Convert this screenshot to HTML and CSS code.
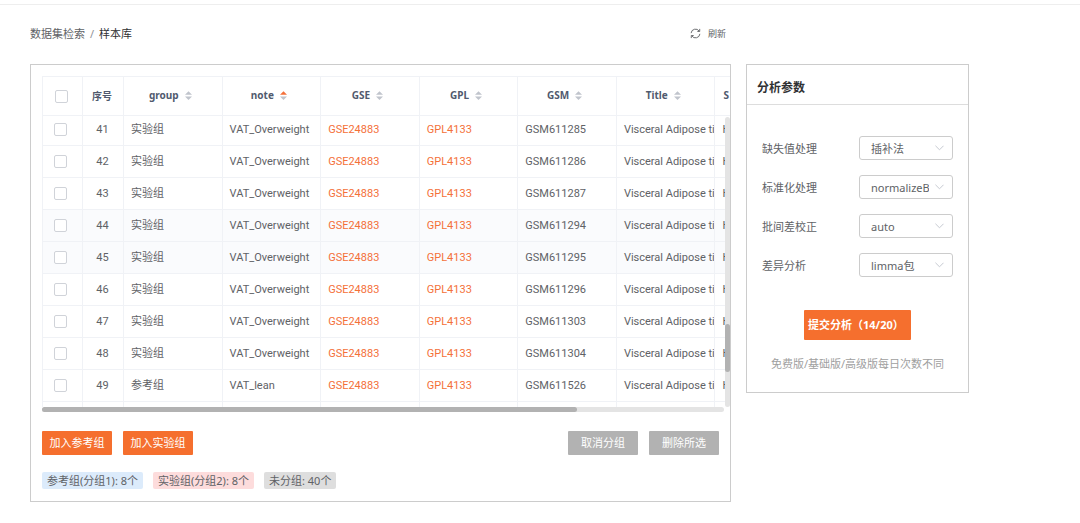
FILE: index.html
```
<!DOCTYPE html>
<html lang="zh-CN">
<head>
  <meta charset="UTF-8">
  <meta name="viewport" content="width=device-width, initial-scale=1.0">
  <title>样本库</title>
  <link rel="stylesheet" href="styles.css">
</head>
<body>
  <div class="top-line"></div>
  <main class="page">
    <div class="page-header">
      <nav class="breadcrumb">
        <a href="#">数据集检索</a>
        <span class="separator">/</span>
        <span class="current">样本库</span>
      </nav>
      <button class="refresh-button" type="button">
        <svg class="refresh-icon" viewBox="0 0 12 12" fill="none" stroke="currentColor">
          <path d="M1.2 5.6A4.8 4.8 0 0 1 10 3.4M10.8 6.4A4.8 4.8 0 0 1 2 8.6"/>
          <path d="M10.6 1v2.8H8M1.4 11V8.2H4"/>
        </svg>
        刷新
      </button>
    </div>

    <section class="panel sample-panel">
      <div class="table-wrap">
        <div class="table-head">
          <table class="sample-table">
            <colgroup><col class="col-check"><col class="col-index"><col span="8"></colgroup>
            <thead>
              <tr id="head-row">
                <th class="plain"><input type="checkbox" aria-label="全选"></th>
                <th class="plain">序号</th>
              </tr>
            </thead>
          </table>
        </div>
        <div class="table-body">
          <table class="sample-table">
            <colgroup><col class="col-check"><col class="col-index"><col span="8"></colgroup>
            <tbody id="sample-rows"></tbody>
          </table>
          <div class="scroll-y"><div class="thumb-y"></div></div>
        </div>
        <div class="scroll-x"><div class="thumb-x"></div></div>
      </div>

      <div class="actions">
        <button class="btn btn-primary" type="button">加入参考组</button>
        <button class="btn btn-primary" type="button">加入实验组</button>
        <button class="btn btn-grey push-right" type="button">取消分组</button>
        <button class="btn btn-grey" type="button">删除所选</button>
      </div>

      <div class="tags">
        <span class="tag tag-blue">参考组(分组1): 8个</span>
        <span class="tag tag-red">实验组(分组2): 8个</span>
        <span class="tag tag-grey">未分组: 40个</span>
      </div>
    </section>

    <aside class="panel params-panel">
      <h2 class="params-title">分析参数</h2>
      <form class="params-form">
        <div class="field">
          <label for="missing">缺失值处理</label>
          <div class="select-box">
            <select id="missing"><option>插补法</option></select>
            <svg class="chevron" viewBox="0 0 10 6"><path d="M.5.5 5 5 9.5.5"/></svg>
          </div>
        </div>
        <div class="field">
          <label for="normalize">标准化处理</label>
          <div class="select-box">
            <select id="normalize"><option>normalizeBetweenArrays</option></select>
            <svg class="chevron" viewBox="0 0 10 6"><path d="M.5.5 5 5 9.5.5"/></svg>
          </div>
        </div>
        <div class="field">
          <label for="batch">批间差校正</label>
          <div class="select-box">
            <select id="batch"><option>auto</option></select>
            <svg class="chevron" viewBox="0 0 10 6"><path d="M.5.5 5 5 9.5.5"/></svg>
          </div>
        </div>
        <div class="field">
          <label for="diff">差异分析</label>
          <div class="select-box">
            <select id="diff"><option>limma包</option></select>
            <svg class="chevron" viewBox="0 0 10 6"><path d="M.5.5 5 5 9.5.5"/></svg>
          </div>
        </div>
        <button class="submit-button" type="button">提交分析（14/20）</button>
        <p class="hint">免费版/基础版/高级版每日次数不同</p>
      </form>
    </aside>
  </main>

  <script>
    const headers = ['group', 'note', 'GSE', 'GPL', 'GSM', 'Title'];
    const sorted = 'note';

    const samples = [
      [41, '实验组', 'VAT_Overweight', 'GSM611285'],
      [42, '实验组', 'VAT_Overweight', 'GSM611286'],
      [43, '实验组', 'VAT_Overweight', 'GSM611287'],
      [44, '实验组', 'VAT_Overweight', 'GSM611294'],
      [45, '实验组', 'VAT_Overweight', 'GSM611295'],
      [46, '实验组', 'VAT_Overweight', 'GSM611296'],
      [47, '实验组', 'VAT_Overweight', 'GSM611303'],
      [48, '实验组', 'VAT_Overweight', 'GSM611304'],
      [49, '参考组', 'VAT_lean', 'GSM611526']
    ];
    const highlighted = [44, 45];

    const headRow = document.getElementById('head-row');
    headers.forEach(name => {
      const th = document.createElement('th');
      th.innerHTML = `<button type="button" class="sort-button${name === sorted ? ' ascending' : ''}">${name}
        <svg class="sort-icon" viewBox="0 0 8 10"><path class="up" d="M4 0 8 4H0z"/><path class="down" d="M0 6h8L4 10z"/></svg></button>`;
      headRow.appendChild(th);
    });
    headRow.insertAdjacentHTML('beforeend', '<th class="left">S</th><th></th>');

    const tbody = document.getElementById('sample-rows');
    samples.forEach(([index, group, note, gsm]) => {
      const row = document.createElement('tr');
      if (highlighted.includes(index)) row.className = 'highlighted';
      row.innerHTML = `
        <td class="check"><input type="checkbox" aria-label="选择 ${index}"></td>
        <td class="index">${index}</td>
        <td>${group}</td>
        <td>${note}</td>
        <td><a href="#">GSE24883</a></td>
        <td><a href="#">GPL4133</a></td>
        <td>${gsm}</td>
        <td>Visceral Adipose ti</td>
        <td>H</td>
        <td></td>`;
      tbody.appendChild(row);
    });
    // start of the next row, cut by the scroll area
    tbody.insertAdjacentHTML('beforeend', `<tr>${'<td></td>'.repeat(10)}</tr>`);
  </script>
</body>
</html>
```
FILE: styles.css
```
* {
  box-sizing: border-box;
}

body {
  margin: 0;
  font-family: "Noto Sans", "Noto Sans CJK SC", sans-serif;
  font-size: 11px;
  line-height: 16px;
  color: #606266;
  background-color: #fff;
}

button,
select,
input {
  font: inherit;
  color: inherit;
  margin: 0;
}

button {
  border: none;
  padding: 0;
  background: none;
  cursor: pointer;
}

a {
  color: inherit;
  text-decoration: none;
}

.top-line {
  height: 5px;
  border-bottom: 1px solid #eee;
}

.page {
  display: grid;
  grid-template-columns: minmax(0, 1fr) 223px;
  column-gap: 15px;
  align-items: start;
  padding: 0 111px 20px 30px;
}

.page-header {
  grid-column: 1;
  display: flex;
  justify-content: space-between;
  align-items: center;
  height: 59px;
  padding: 0 5px 2px 0;
}

.breadcrumb {
  display: flex;
  gap: 5px;
}

.breadcrumb .separator {
  color: #909399;
}

.breadcrumb .current {
  color: #303133;
}

.refresh-button {
  display: flex;
  align-items: center;
  gap: 7px;
  font-size: 9px;
}

.refresh-icon {
  width: 11px;
  height: 11px;
}

.panel {
  grid-row: 2;
  border: 1px solid #ccc;
}

.sample-panel {
  padding: 11px 0 12px 11px;
}

/* sample table */
.table-head,
.table-body {
  overflow: hidden;
  border-left: 1px solid #f0f2f6;
}

.table-head {
  border-top: 1px solid #f0f2f6;
}

.table-body {
  position: relative;
  height: 291px;
}

.sample-table {
  width: 126.6%;
  table-layout: fixed;
  border-collapse: separate;
  border-spacing: 0;
}

/* list is scrolled a little into row 41 */
.table-body .sample-table {
  margin-top: -2px;
  font-family: Roboto, "Noto Sans CJK SC", sans-serif;
}

.col-check {
  width: 40px;
}

.col-index {
  width: 41px;
}

.sample-table th,
.sample-table td {
  height: 32px;
  padding: 0 0 0 7px;
  border-right: 1px solid #f0f2f6;
  border-bottom: 1px solid #f0f2f6;
  text-align: left;
  white-space: nowrap;
  overflow: hidden;
}

.sample-table th {
  height: 39px;
  padding: 0 13px 2px 8px;
  font-size: 10px;
  font-weight: bold;
  text-align: center;
  color: #515a6e;
}

.sample-table th.plain {
  padding: 0 2px 0 0;
}

.sample-table th.left {
  text-align: left;
}

.sample-table td.check {
  padding: 0 4px 0 0;
}

.sample-table td.index {
  padding: 0 1px 0 0;
  text-align: center;
}

.sample-table a {
  color: #f4703a;
}

.highlighted {
  background-color: #fafbfd;
}

.sample-table input {
  appearance: none;
  display: block;
  width: 13px;
  height: 13px;
  margin: 0 auto;
  border: 1px solid #d0d3d9;
  border-radius: 2px;
  background-color: #fff;
}

.sort-button {
  display: inline-flex;
  align-items: center;
  gap: 6px;
}

.sort-icon {
  width: 7px;
  height: 9px;
  fill: #c0c4cc;
}

.ascending .up {
  fill: #f4703a;
}

.scroll-y {
  position: absolute;
  top: 1px;
  right: 0;
  bottom: 0;
  width: 5px;
  border-radius: 3px;
  background-color: #e4e4e4;
}

.thumb-y {
  height: 48px;
  margin-top: 207px;
  border-radius: 3px;
  background-color: #b2b2b2;
}

.scroll-x {
  height: 5px;
  margin-right: 6px;
  border-radius: 3px;
  background-color: #e4e4e4;
}

.thumb-x {
  width: 78.4%;
  height: 5px;
  border-radius: 3px;
  background-color: #b2b2b2;
}

/* buttons and counters below the table */
.actions {
  display: flex;
  gap: 11px;
  margin: 19px 11px 17px 0;
}

.btn {
  width: 70px;
  height: 24px;
  border-radius: 1px;
  color: #fff;
}

.btn-primary {
  background-color: #f56f2e;
}

.btn-grey {
  background-color: #b2b2b2;
}

.push-right {
  margin-left: auto;
}

.tags {
  display: flex;
  gap: 10px;
}

.tag {
  padding: 1px 5px 0;
  border-radius: 2px;
}

.tag-blue {
  background-color: #dcebfb;
}

.tag-red {
  background-color: #fddcdc;
}

.tag-grey {
  background-color: #dedede;
}

/* analysis parameters */
.params-title {
  margin: 0;
  padding: 15px 10px 8px;
  border-bottom: 1px solid #ddd;
  font-size: 12px;
  color: #303133;
}

.params-form {
  display: flex;
  flex-direction: column;
  gap: 15px;
  padding: 31px 15px 20px;
}

.field {
  display: flex;
  justify-content: space-between;
  align-items: center;
}

.field label {
  padding-top: 2px;
}

.select-box {
  position: relative;
  width: 94px;
}

.select-box select {
  appearance: none;
  display: block;
  width: 100%;
  height: 24px;
  padding: 1px 23px 0 11px;
  border: 1px solid #ccc;
  border-radius: 3px;
  background-color: #fff;
}

.chevron {
  position: absolute;
  top: 9px;
  right: 9px;
  width: 9px;
  height: 6px;
  fill: none;
  stroke: #c0c4cc;
  pointer-events: none;
}

.submit-button {
  align-self: center;
  width: 107px;
  height: 30px;
  margin-top: 18px;
  padding-left: 4px;
  border-radius: 1px;
  font-weight: bold;
  text-align: left;
  white-space: nowrap;
  color: #fff;
  background-color: #f56f2e;
}

.hint {
  margin: 0;
  padding-top: 1px;
  text-align: center;
  color: #a0a0a0;
}
```
